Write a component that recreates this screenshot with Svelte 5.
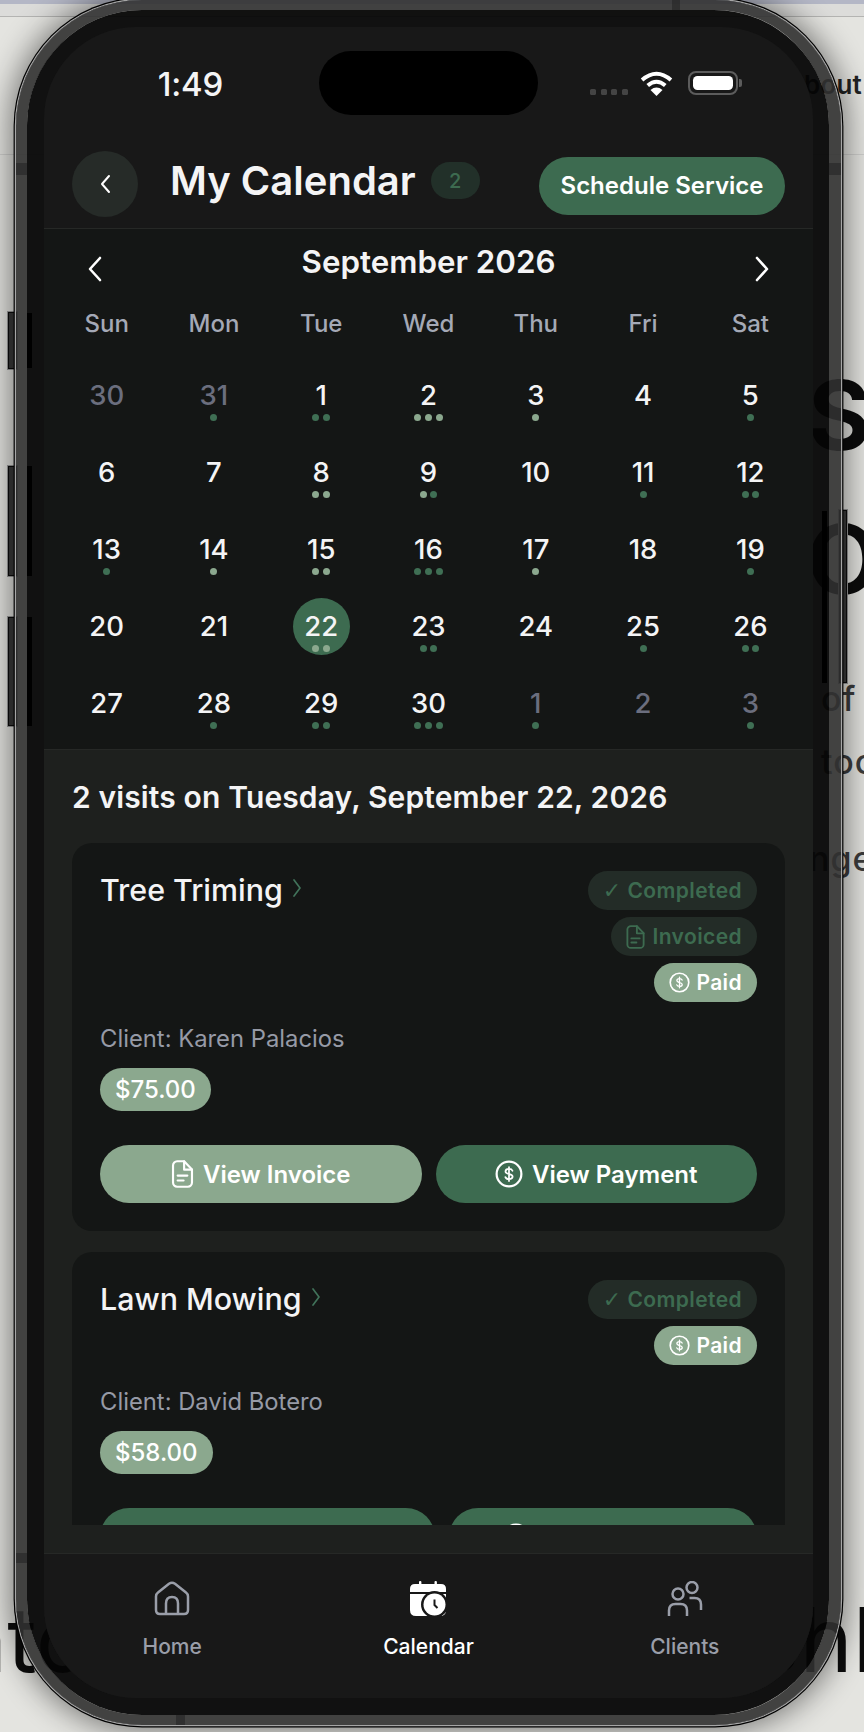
<script>
  const d = 'd', l = 'l';
  const weekdays = ['Sun', 'Mon', 'Tue', 'Wed', 'Thu', 'Fri', 'Sat'];
  const days = [
    [30, [], 1], [31, [d], 1], [1, [d, d]], [2, [l, l, l]], [3, [l]], [4, []], [5, [d]],
    [6, []], [7, []], [8, [l, l]], [9, [l, d]], [10, []], [11, [d]], [12, [d, d]],
    [13, [d]], [14, [l]], [15, [l, l]], [16, [d, d, d]], [17, [l]], [18, []], [19, [d]],
    [20, []], [21, []], [22, [l, l], 0, 1], [23, [d, d]], [24, []], [25, [d]], [26, [d, d]],
    [27, []], [28, [d]], [29, [d, d]], [30, [d, d, d]], [1, [d], 1], [2, [], 1], [3, [d], 1]
  ];
</script>

{#snippet dollar(cls)}
  <svg class={cls} viewBox="0 0 24 24" fill="none" stroke="currentColor" stroke-width="1.9" stroke-linecap="round">
    <circle cx="12" cy="12" r="10.6" />
    <path d="M15 9.2c-.4-1-1.5-1.6-3-1.6-1.8 0-3 .9-3 2.2 0 3 6.100 1.500 6.100 4.400 0 1.300-1.300 2.200-3.100 2.200-1.500 0-2.700-.6-3.100-1.700M12 6v12" stroke-width="1.500" />
  </svg>
{/snippet}

{#snippet doc(cls)}
  <svg class={cls} viewBox="0 0 20 26" fill="none" stroke="currentColor" stroke-width="2" stroke-linecap="round" stroke-linejoin="round">
    <path d="M5 1.200h6.500l7.300 7.600V21a3.800 3.800 0 0 1-3.800 3.800H5A3.800 3.800 0 0 1 1.200 21V5A3.800 3.800 0 0 1 5 1.200z" />
    <path d="M11.500 1.200V9h7.300M5.500 14.500h9M5.500 19h5.500" />
  </svg>
{/snippet}

<div class="stage">
  <span class="bg bout">bout</span>
  <span class="bg big-s">S</span>
  <span class="bg big-o">O</span>
  <span class="bg small of">of</span>
  <span class="bg small too">too</span>
  <span class="bg small nge">nge</span>
  <span class="bg huge nto">nto</span>
  <span class="bg huge shl">shl</span>

  <i class="side s1"></i>
  <i class="side s2"></i>
  <i class="side s3"></i>
  <i class="side s4"></i>

  <div class="phone">
    <i class="band b1"></i><i class="band b2"></i><i class="band b3"></i><i class="band b4"></i><i class="band b5"></i>
    <i class="mark m1"></i><i class="mark m2"></i><i class="mark m3"></i><i class="mark m4"></i>
    <div class="bezel">
      <div class="screen">
        <div class="status">
          <span class="time">1:49</span>
          <div class="island"></div>
          <div class="sys">
            <div class="signal"><i></i><i></i><i></i><i></i></div>
            <svg class="wifi" viewBox="0 0 32 24" fill="none" stroke="#fff" stroke-width="3.800">
              <path d="M2 8.500Q16-3.500 30 8.500" />
              <path d="M7.500 14Q16 6.500 24.500 14" />
              <path d="M16 24l-5.800-5.800Q16 13.500 21.800 18.200z" fill="#fff" stroke="none" />
            </svg>
            <div class="battery"><div class="cell"><i></i></div><b></b></div>
          </div>
        </div>

        <header class="head">
          <button class="back" aria-label="Back">
            <svg viewBox="0 0 12 20" fill="none" stroke="#fff" stroke-width="2" stroke-linecap="round" stroke-linejoin="round"><path d="M10 2L3 10l7 8" /></svg>
          </button>
          <h1>My Calendar</h1>
          <span class="count">2</span>
          <button class="schedule">Schedule Service</button>
        </header>

        <section class="calendar">
          <div class="month">
            <svg class="nav" viewBox="0 0 16 26" fill="none" stroke="#fff" stroke-width="2.600" stroke-linecap="round" stroke-linejoin="round"><path d="M13 2L3 13l10 11" /></svg>
            <h2>September 2026</h2>
            <svg class="nav" viewBox="0 0 16 26" fill="none" stroke="#fff" stroke-width="2.600" stroke-linecap="round" stroke-linejoin="round"><path d="M3 2l10 11L3 24" /></svg>
          </div>
          <div class="grid weeks">
            {#each weekdays as w}<span>{w}</span>{/each}
          </div>
          <div class="grid dates">
            {#each days as [n, dots, muted, sel]}
              <div class="day" class:muted class:sel>
                <span class="num">{n}</span>
                <div class="dots">
                  {#each dots as c}<i class={c}></i>{/each}
                </div>
              </div>
            {/each}
          </div>
        </section>

        <section class="visits">
          <h3>2 visits on Tuesday, September 22, 2026</h3>
          <div class="list">
            <article class="card">
              <div class="top">
                <div class="name">Tree Triming <svg viewBox="0 0 10 20" fill="none" stroke="#41735a" stroke-width="1.700" stroke-linecap="round" stroke-linejoin="round"><path d="M2 2l6 8-6 8" /></svg></div>
                <div class="pills">
                  <span class="pill soft"><em>✓</em> Completed</span>
                  <span class="pill soft inv">{@render doc('pi')} Invoiced</span>
                  <span class="pill sage">{@render dollar('pi')} Paid</span>
                </div>
              </div>
              <p class="client">Client: Karen Palacios</p>
              <span class="price">$75.00</span>
              <div class="actions">
                <button class="act sage">{@render doc('ai')} View Invoice</button>
                <button class="act green">{@render dollar('ad')} View Payment</button>
              </div>
            </article>

            <article class="card">
              <div class="top">
                <div class="name">Lawn Mowing <svg viewBox="0 0 10 20" fill="none" stroke="#41735a" stroke-width="1.700" stroke-linecap="round" stroke-linejoin="round"><path d="M2 2l6 8-6 8" /></svg></div>
                <div class="pills">
                  <span class="pill soft"><em>✓</em> Completed</span>
                  <span class="pill sage">{@render dollar('pi')} Paid</span>
                </div>
              </div>
              <p class="client">Client: David Botero</p>
              <span class="price">$58.00</span>
              <div class="actions">
                <button class="act green wide">Create Invoice</button>
                <button class="act green narrow">{@render dollar('ad')} View Payment</button>
              </div>
            </article>
          </div>
        </section>

        <nav class="tabs">
          <div class="tab">
            <svg class="ti" viewBox="0 0 36 35" fill="none" stroke="#9a9ea9" stroke-width="2.500" stroke-linejoin="round">
              <path d="M2 15.500Q2 13 4 11.500L15 2.800Q18 .8 21 2.800L32 11.500Q34 13 34 15.500V29Q34 33 30 33H6Q2 33 2 29Z" />
              <path d="M12 33V22.500Q12 16 18 16Q24 16 24 22.500V33" />
            </svg>
            <span>Home</span>
          </div>
          <div class="tab on">
            <svg class="ti" viewBox="0 0 36 35">
              <path fill="#fff" d="M0 11V8Q0 3 5 3H31Q36 3 36 8V11Z" />
              <rect fill="#fff" x="9" y="0" width="2.400" height="5" rx="1" />
              <rect fill="#fff" x="24.500" y="0" width="2.400" height="5" rx="1" />
              <path fill="#fff" d="M0 13H36V29Q36 35 30 35H6Q0 35 0 29Z" />
              <circle cx="24.500" cy="23.500" r="13.500" fill="#181818" />
              <circle cx="24.500" cy="23.500" r="11" fill="#fff" />
              <path d="M24.500 18.500V24l3 3" fill="none" stroke="#181818" stroke-width="2" />
            </svg>
            <span>Calendar</span>
          </div>
          <div class="tab">
            <svg class="ti" viewBox="0 0 35 35" fill="none" stroke="#9a9ea9" stroke-width="2.500" stroke-linecap="butt">
              <circle cx="10.500" cy="13" r="5.500" />
              <path d="M1.500 35V29.500Q1.500 23 8 23H13Q19.500 23 19.500 29.500V35" />
              <circle cx="24.500" cy="6.500" r="5.500" />
              <path d="M22 17H27Q33.500 17 33.500 23.500V29" />
            </svg>
            <span>Clients</span>
          </div>
        </nav>
      </div>
    </div>
  </div>
</div>

<style>
  :global(body) { margin: 0; }
  * { box-sizing: border-box; }
  button { border: 0; font: inherit; color: inherit; padding: 0; }
  h1, h2, h3, p { margin: 0; }
  i { display: block; }

  .stage {
    position: relative;
    width: 864px;
    height: 1732px;
    overflow: hidden;
    padding-left: 16px;
    font-family: Inter, "Liberation Sans", sans-serif;
    color: #f4f4f5;
    background: linear-gradient(#b4b7c6 0 4px, #dcdcda 4px 16px, #b4b4b2 16px 17px, #e4e4e0 17px 154px, #cfcfcd 154px 155px, #e4e4e0 155px);
  }

  .bg { position: absolute; color: #0c0c0c; font-family: Inter, sans-serif; line-height: 1; white-space: nowrap; }
  .bout { left: 804px; top: 72px; font-size: 26px; font-weight: 600; color: #222; letter-spacing: 0.2px; }
  .big-s { left: 808px; top: 367px; font-size: 96px; font-weight: 700; }
  .big-o { left: 806px; top: 511px; font-size: 96px; font-weight: 600; }
  .small { font-size: 34px; font-weight: 500; color: #3c3c3c; letter-spacing: 1px; }
  .of { left: 821px; top: 682px; }
  .too { left: 821px; top: 745px; }
  .nge { left: 809px; top: 842px; }
  .huge { font-size: 90px; font-weight: 400; }
  .nto { left: -46px; top: 1595px; }
  .shl { left: 752px; top: 1595px; }

  .side { position: absolute; background: #3a3a3a; border: 1px solid #0c0c0c; outline: 1px solid #9a9a9a; }
  .s1 { left: 8px; top: 312px; width: 9px; height: 57px; }
  .s2 { left: 8px; top: 466px; width: 9px; height: 110px; }
  .s3 { left: 8px; top: 617px; width: 9px; height: 109px; }
  .s4 { left: 839px; top: 510px; width: 8px; height: 173px; }

  .phone {
    position: relative;
    width: 825px;
    height: 1725px;
    border: solid rgba(48, 48, 48, 0.9);
    border-width: 10px 12px 10px 11px;
    border-radius: 126px;
    box-shadow: 0 0 0 1.200px #a6a6a6, 0 0 0 2.400px #000, 0 0 30px 6px rgba(0, 0, 0, 0.48);
  }
  .band { position: absolute; background: rgba(34, 34, 34, 0.55); }
  .b1 { left: 645px; top: -10px; width: 8px; height: 10px; }
  .b2 { left: -11px; top: 153px; width: 11px; height: 12px; }
  .b3 { right: -12px; top: 153px; width: 12px; height: 12px; }
  .b4 { left: -11px; top: 1543px; width: 11px; height: 10px; }
  .b5 { left: 149px; bottom: -10px; width: 9px; height: 10px; }

  .mark { position: absolute; background: #000; }
  .m1 { left: 0; top: 303px; width: 5px; height: 55px; }
  .m2 { left: 0; top: 456px; width: 5px; height: 110px; }
  .m3 { left: 0; top: 607px; width: 5px; height: 109px; }
  .m4 { left: 795px; top: 501px; width: 5px; height: 172px; }

  .bezel {
    height: 100%;
    padding: 17px 16px 17px 17px;
    border-radius: 115px;
    background: rgba(5, 5, 5, 0.95);
  }

  .screen {
    display: flex;
    flex-direction: column;
    width: 769px;
    height: 1671px;
    overflow: hidden;
    border-radius: 92px;
    background: #181818;
  }

  .status { display: grid; grid-template-columns: 275px 219px 1fr; height: 112px; flex: none; }
  .time { padding: 36px 0 0 18px; text-align: center; font-size: 33px; font-weight: 500; line-height: 42px; letter-spacing: -0.2px; }
  .island { height: 64px; margin-top: 24px; border-radius: 32px; background: #000; }
  .sys { display: flex; align-items: flex-start; padding: 44px 0 0 52px; }
  .signal { display: flex; gap: 4.500px; margin-top: 18px; }
  .signal i { width: 6px; height: 6px; border-radius: 1.500px; background: #444; }
  .wifi { width: 33px; height: 25px; margin-left: 12px; }
  .battery { display: flex; align-items: center; margin-left: 15px; height: 24px; }
  .cell { width: 50px; height: 24px; padding: 3px; border: 2.500px solid #5c5c5c; border-radius: 8px; }
  .cell i { width: 100%; height: 100%; background: #fff; border-radius: 4.500px; }
  .battery b { width: 3px; height: 8px; margin-left: 1px; background: #5c5c5c; border-radius: 0 2px 2px 0; }

  .head {
    display: flex;
    align-items: center;
    flex: none;
    height: 90px;
    padding: 0 28px;
    border-bottom: 1px solid #262826;
  }
  .back {
    display: grid;
    place-items: center;
    width: 66px;
    height: 66px;
    border-radius: 50%;
    background: #262b28;
  }
  .back svg { width: 12px; height: 20px; }
  h1 { margin: 0 0 6px 32px; font-size: 40px; line-height: 46px; font-weight: 600; }
  .count {
    display: grid;
    place-items: center;
    width: 49px;
    height: 37px;
    margin: 0 0 6px 15px;
    border-radius: 19px;
    background: #223029;
    color: #3d6b50;
    font-size: 20px;
    font-weight: 500;
  }
  .schedule {
    width: 246px;
    height: 58px;
    margin: 4px 0 0 auto;
    border-radius: 29px;
    background: #3d6b50;
    color: #fff;
    font-size: 24px;
    font-weight: 600;
  }

  .calendar { flex: none; height: 521px; border-bottom: 1px solid #262826; background: #141615; }
  .month { display: flex; align-items: center; justify-content: space-between; height: 66px; padding: 0 43px; }
  .month h2 { margin-top: -1px; font-size: 31.300px; font-weight: 600; line-height: 36px; }
  .nav { width: 16px; height: 26px; margin-top: 14px; }
  .grid { display: grid; grid-template-columns: repeat(7, 1fr); padding: 0 9px; text-align: center; }
  .weeks { height: 72px; padding-top: 16px; font-size: 24px; font-weight: 500; line-height: 26px; color: #a4a9b6; }
  .dates { row-gap: 20px; }
  .day { display: flex; flex-direction: column; align-items: center; height: 57px; }
  .num { display: grid; place-items: center; width: 57px; height: 57px; padding-bottom: 2px; margin-bottom: -57px; border-radius: 50%; font-size: 27.500px; font-weight: 500; }
  .muted .num { color: #6b6e7e; }
  .sel .num { background: #3d6b50; }
  .dots { position: relative; display: flex; gap: 3.700px; margin-top: 47px; }
  .dots i { width: 7px; height: 7px; border-radius: 50%; }
  .dots .d { background: #3f6f54; }
  .dots .l { background: #8ba88e; }

  .visits { display: flex; flex-direction: column; flex: 1; min-height: 0; padding: 0 28px 28px; background: #1e201e; }
  h3 { flex: none; padding: 29px 0 28px; font-size: 30px; font-weight: 600; line-height: 36px; letter-spacing: 0.13px; color: #f4f4f5; }
  .list { flex: 1; min-height: 0; overflow: hidden; display: flex; flex-direction: column; gap: 21px; }
  .card { flex: none; padding: 28px; border-radius: 20px; background: #141615; }
  .top { display: flex; justify-content: space-between; align-items: flex-start; }
  .name { display: flex; align-items: center; gap: 9px; font-size: 30.400px; font-weight: 500; line-height: 38px; }
  .name svg { width: 10px; height: 20px; margin-top: -4px; }
  .pills { display: flex; flex-direction: column; align-items: flex-end; gap: 7px; }
  .pill {
    display: flex;
    align-items: center;
    gap: 6px;
    height: 39px;
    padding: 0 15px;
    border-radius: 20px;
    font-size: 21px;
    font-weight: 600;
    letter-spacing: 0.4px;
  }
  .pill em { font-style: normal; font-family: "DejaVu Sans", sans-serif; font-size: 22px; }
  .pill.soft { background: #232c27; color: #3d6b50; }
  .pill.sage { background: #8ba88e; color: #fff; }
  .pi { width: 21px; height: 21px; flex: none; }
  .pill.soft .pi { width: 19px; height: 24px; }
  .pill.inv { gap: 8px; }
  .client { margin-top: 25px; font-size: 23.800px; line-height: 24px; color: #969aa6; }
  .price {
    display: block;
    width: fit-content;
    margin-top: 17px;
    padding: 0 15px;
    border-radius: 22px;
    background: #8ba88e;
    color: #fff;
    font-size: 24px;
    font-weight: 500;
    line-height: 43px;
  }
  .actions { display: flex; gap: 14px; margin-top: 34px; }
  .act {
    display: flex;
    align-items: center;
    justify-content: center;
    gap: 9px;
    flex: 1 1 0;
    height: 58px;
    border-radius: 29px;
    color: #fff;
    font-size: 24px;
    font-weight: 600;
  }
  .act.sage { background: #8ba88e; }
  .act.green { background: #3d6b50; }
  .act.wide { flex: 335 1 0; }
  .act.narrow { flex: 308 1 0; }
  .ai { width: 23px; height: 28px; }
  .ad { width: 28px; height: 28px; }

  .tabs { display: grid; grid-template-columns: repeat(3, 1fr); flex: none; height: 145px; border-top: 1px solid #262826; background: #181818; }
  .tab { display: flex; flex-direction: column; align-items: center; padding-top: 27px; color: #9a9ea9; font-size: 21px; font-weight: 500; line-height: 26px; }
  .tab .ti { width: 36px; height: 35px; margin-bottom: 18px; }
  .tab.on { color: #fff; }
</style>
